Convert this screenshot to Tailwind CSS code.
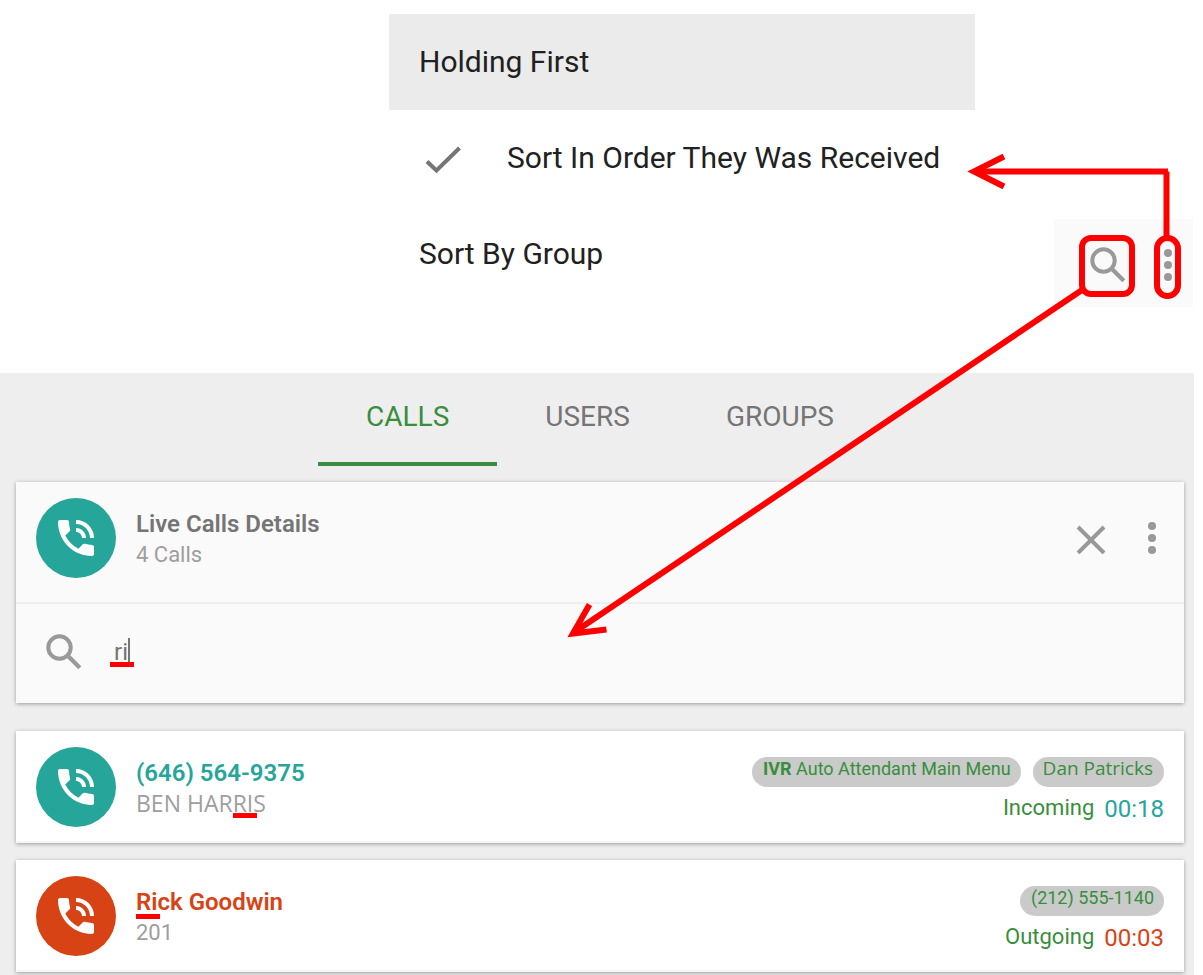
<!DOCTYPE html>
<html lang="en">
<head>
    <meta charset="UTF-8">
    <meta name="viewport" content="width=device-width, initial-scale=1.0">
    <title>Live Calls Details</title>
    <script src="https://cdn.jsdelivr.net/npm/@tailwindcss/browser@4"></script>
</head>
<body class="relative min-h-screen flex flex-col overflow-x-hidden bg-white font-['Roboto','Liberation_Sans',sans-serif]">
    <!-- Shared icons -->
    <svg class="hidden">
        <symbol id="phone" viewBox="0 0 24 24">
            <path d="M20 15.5c-1.25 0-2.45-.2-3.57-.57-.35-.11-.74-.03-1.02.24l-2.2 2.2c-2.83-1.44-5.15-3.75-6.59-6.59l2.2-2.21c.28-.26.36-.65.25-1C8.7 6.45 8.5 5.25 8.5 4c0-.55-.45-1-1-1H4c-.55 0-1 .45-1 1 0 9.39 7.61 17 17 17 .55 0 1-.45 1-1v-3.5c0-.55-.45-1-1-1zM19 12h2c0-4.97-4.03-9-9-9v2c3.87 0 7 3.13 7 7zm-4 0h2c0-2.76-2.24-5-5-5v2c1.66 0 3 1.34 3 3z"/>
        </symbol>
        <symbol id="search" viewBox="0 0 36 36">
            <circle cx="13.5" cy="13.5" r="11.2" fill="none" stroke="currentColor" stroke-width="4"/>
            <path d="M22.5 22.5l11.3 11.3" stroke="currentColor" stroke-width="4.2"/>
        </symbol>
        <symbol id="more" viewBox="0 0 8 32">
            <circle cx="4" cy="4" r="4"/><circle cx="4" cy="16" r="4"/><circle cx="4" cy="28" r="4"/>
        </symbol>
    </svg>

    <!-- Sort menu and toolbar -->
    <section class="flex justify-end items-start h-[373px] pt-[14px] pr-[10px]">
        <ul class="w-[586px] text-3xl leading-9 text-[#212121]">
            <li><button class="flex items-center w-full h-24 px-[30px] bg-[#ebebeb]">Holding First</button></li>
            <li>
                <button class="flex items-center w-full h-24 px-[30px]">
                    <svg class="w-9 h-8 ml-[6px] mr-[46px]" viewBox="0 0 36 32" fill="none" stroke="#757575" stroke-width="4"><path d="M2 19.500l9.500 9L34.500 6"/></svg>
                    Sort In Order They Was Received
                </button>
            </li>
            <li><button class="flex items-center w-full h-24 px-[30px]">Sort By Group</button></li>
        </ul>
        <div class="flex justify-between items-center w-[139px] h-[88px] mt-[205px] ml-[79px] pt-1 pl-9 pr-[21px] bg-[#fafafa] text-[#999]">
            <button aria-label="Search"><svg class="w-9 h-9"><use href="#search"/></svg></button>
            <button aria-label="More"><svg class="w-2 h-8" fill="currentColor"><use href="#more"/></svg></button>
        </div>
    </section>

    <main class="flex-1 mr-[9px] px-4 bg-[#eee]">
        <!-- Tabs -->
        <nav class="flex justify-center h-[93px] pl-[6px] text-[28px] leading-8 text-[#757575]">
            <button class="px-12 pb-[2px] border-b-4 border-[#388e3c] text-[#388e3c]">CALLS</button>
            <button class="px-12 pb-[2px] border-b-4 border-transparent">USERS</button>
            <button class="px-12 pb-[2px] border-b-4 border-transparent">GROUPS</button>
        </nav>

        <!-- Header card -->
        <section class="mt-4 -mr-[6px] bg-[#fafafa] shadow-[0_1px_4px_rgba(0,0,0,0.35)]">
            <header class="flex items-start h-[122px] px-5 pt-4 border-b-2 border-[#eee]">
                <span class="flex items-center justify-center size-20 rounded-full bg-[#26a69a] text-white"><svg class="size-12" fill="currentColor"><use href="#phone"/></svg></span>
                <div class="pl-5 pt-[10px]">
                    <h1 class="text-2xl leading-8 font-semibold text-[#757575]">Live Calls Details</h1>
                    <p class="text-[22px] leading-[30px] text-[#9e9e9e]">4 Calls</p>
                </div>
                <div class="flex items-center h-20 ml-auto pr-2 gap-10 text-[#999]">
                    <button aria-label="Close"><svg class="size-8" viewBox="0 0 32 32" fill="none" stroke="currentColor" stroke-width="4"><path d="M2 5l26 26M28 5L2 31"/></svg></button>
                    <button aria-label="More"><svg class="w-2 h-8" fill="currentColor"><use href="#more"/></svg></button>
                </div>
            </header>
            <label class="flex items-center h-[99px] pb-1 px-[30px] text-[#999]">
                <svg class="w-9 h-9" aria-label="Search"><use href="#search"/></svg>
                <span class="relative flex-1 ml-8">
                    <input type="text" value="ri" class="w-full text-2xl leading-8 text-[#757575] outline-none">
                    <span class="absolute left-[14px] top-[2px] w-[2px] h-6 bg-[#757575]"></span>
                    <span class="absolute -left-1 top-[26px] w-6 h-[5px] bg-[#f00]"></span>
                </span>
            </label>
        </section>

        <!-- Calls -->
        <article class="flex h-28 mt-7 -mr-[6px] px-5 pt-4 bg-white border-b-2 border-[#f5f5f5] shadow-[0_1px_4px_rgba(0,0,0,0.35)]">
            <span class="flex items-center justify-center size-20 rounded-full bg-[#26a69a] text-white"><svg class="size-12" fill="currentColor"><use href="#phone"/></svg></span>
            <div class="pl-5 pt-[10px]">
                <h2 class="text-2xl leading-8 font-semibold text-[#26a69a]">(646) 564-9375</h2>
                <p class="text-[23px] leading-7 text-[#9e9e9e] font-['Open_Sans',sans-serif]">BEN HAR<span class="relative">RI<span class="absolute left-0 top-[26px] w-6 h-[5px] bg-[#f00]"></span></span>S</p>
            </div>
            <div class="ml-auto pt-[10px] text-[#388e3c]">
                <div class="flex justify-end gap-3 text-lg leading-6">
                    <span class="h-[30px] pl-[11px] pr-[10px] rounded-full bg-[#cacaca]"><b>IVR</b> Auto Attendant Main Menu</span>
                    <span class="h-[30px] pl-[10px] pr-[11px] rounded-full bg-[#cacaca] text-[19px] leading-[22px] font-['Open_Sans',sans-serif]">Dan Patricks</span>
                </div>
                <div class="flex justify-end gap-[10px] pt-[5px] text-[22px] leading-8">
                    <span>Incoming</span>
                    <time class="text-2xl leading-[34px] text-[#26a69a]">00:18</time>
                </div>
            </div>
        </article>
        <article class="flex h-28 mt-[17px] mb-[3px] -mr-[6px] px-5 pt-4 bg-white border-b-2 border-[#f5f5f5] shadow-[0_1px_4px_rgba(0,0,0,0.35)]">
            <span class="flex items-center justify-center size-20 rounded-full bg-[#d84315] text-white"><svg class="size-12" fill="currentColor"><use href="#phone"/></svg></span>
            <div class="pl-5 pt-[10px]">
                <h2 class="text-2xl leading-8 font-semibold text-[#d84315]"><span class="relative">Ri<span class="absolute left-0 top-[26px] w-6 h-[5px] bg-[#f00]"></span></span>ck Goodwin</h2>
                <p class="text-[22px] leading-[30px] text-[#9e9e9e]">201</p>
            </div>
            <div class="ml-auto pt-[10px] text-[#388e3c]">
                <div class="flex justify-end gap-3 text-lg leading-6">
                    <span class="h-[30px] pl-[11px] pr-[10px] rounded-full bg-[#cacaca]">(212) 555-1140</span>
                </div>
                <div class="flex justify-end gap-[10px] pt-[5px] text-[22px] leading-8">
                    <span>Outgoing</span>
                    <time class="text-2xl leading-[34px] text-[#d84315]">00:03</time>
                </div>
            </div>
        </article>
    </main>

    <!-- Callout arrows, anchored to the right like the toolbar -->
    <svg class="absolute right-0 top-0 w-[660px] h-[660px] pointer-events-none" viewBox="543 0 660 660" fill="none" stroke="#f00" stroke-width="6">
        <rect x="1082" y="238" width="50" height="56" rx="9"/>
        <rect x="1157" y="238" width="21" height="58" rx="10.5"/>
        <path d="M1166.5 238V171.500M1168 171.500H975"/>
        <path d="M1004 156.500l-30 15 30 15"/>
        <path d="M1082 290L573 633"/>
        <path d="M589.500 604.500L573 633.500l33.500-4"/>
    </svg>
</body>
</html>
